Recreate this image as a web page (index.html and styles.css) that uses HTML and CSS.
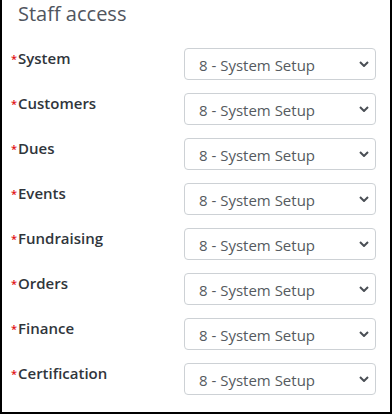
FILE: index.html
```html
<!DOCTYPE html>
<html lang="en">
<head>
    <meta charset="UTF-8" />
    <meta name="viewport" content="width=device-width, initial-scale=1.0" />
    <title>Staff access</title>
    <link rel="stylesheet" href="styles.css">
</head>
<body>

<section class="panel">
    <h2>Staff access</h2>
    <div class="access-list">
        <div class="access-row">
            <label><span class="req">*</span>System</label>
            <div class="select-wrap">
                <select><option>8 - System Setup</option></select>
                <svg class="chevron" viewBox="0 0 10 6"><path d="M1 1l4 4 4-4"/></svg>
            </div>
        </div>
        <div class="access-row">
            <label><span class="req">*</span>Customers</label>
            <div class="select-wrap">
                <select><option>8 - System Setup</option></select>
                <svg class="chevron" viewBox="0 0 10 6"><path d="M1 1l4 4 4-4"/></svg>
            </div>
        </div>
        <div class="access-row">
            <label><span class="req">*</span>Dues</label>
            <div class="select-wrap">
                <select><option>8 - System Setup</option></select>
                <svg class="chevron" viewBox="0 0 10 6"><path d="M1 1l4 4 4-4"/></svg>
            </div>
        </div>
        <div class="access-row">
            <label><span class="req">*</span>Events</label>
            <div class="select-wrap">
                <select><option>8 - System Setup</option></select>
                <svg class="chevron" viewBox="0 0 10 6"><path d="M1 1l4 4 4-4"/></svg>
            </div>
        </div>
        <div class="access-row">
            <label><span class="req">*</span>Fundraising</label>
            <div class="select-wrap">
                <select><option>8 - System Setup</option></select>
                <svg class="chevron" viewBox="0 0 10 6"><path d="M1 1l4 4 4-4"/></svg>
            </div>
        </div>
        <div class="access-row">
            <label><span class="req">*</span>Orders</label>
            <div class="select-wrap">
                <select><option>8 - System Setup</option></select>
                <svg class="chevron" viewBox="0 0 10 6"><path d="M1 1l4 4 4-4"/></svg>
            </div>
        </div>
        <div class="access-row">
            <label><span class="req">*</span>Finance</label>
            <div class="select-wrap">
                <select><option>8 - System Setup</option></select>
                <svg class="chevron" viewBox="0 0 10 6"><path d="M1 1l4 4 4-4"/></svg>
            </div>
        </div>
        <div class="access-row">
            <label><span class="req">*</span>Certification</label>
            <div class="select-wrap">
                <select><option>8 - System Setup</option></select>
                <svg class="chevron" viewBox="0 0 10 6"><path d="M1 1l4 4 4-4"/></svg>
            </div>
        </div>
    </div>
</section>

</body>
</html>
```

FILE: styles.css
```css
:root {
    --heading: #50555e;
    --label: #30353b;
    --field-text: #555a60;
    --field-border: #cdd1d5;
    --required: #e01010;
}

* {
    box-sizing: border-box;
    margin: 0;
    padding: 0;
}

body {
    font-family: 'Open Sans', sans-serif;
    background: #fff;
}

.panel {
    width: 392px;
    height: 414px;
    border: 2px solid #000;
    border-top: none;
    padding: 2px 14px 0 9px;
}

.panel h2 {
    font-size: 20px;
    font-weight: 400;
    line-height: 24px;
    color: var(--heading);
    padding-left: 7px;
    margin-bottom: 22px;
}

.access-list {
    display: flex;
    flex-direction: column;
    gap: 13px;
}

.access-row {
    display: flex;
    justify-content: space-between;
    align-items: flex-start;
}

.access-row label {
    font-size: 15px;
    font-weight: 600;
    line-height: 20px;
    color: var(--label);
}

.req {
    display: inline-block;
    width: 7px;
    color: var(--required);
    font-size: 11px;
    font-weight: 600;
    vertical-align: 1px;
}

.select-wrap {
    position: relative;
    width: 192px;
}

.select-wrap select {
    appearance: none;
    -webkit-appearance: none;
    width: 100%;
    height: 32px;
    border: 1px solid var(--field-border);
    border-radius: 4px;
    background: #fff;
    padding: 2px 30px 0 14px;
    font-family: 'Open Sans', sans-serif;
    font-size: 15px;
    color: var(--field-text);
}

/* flèche du select */
.chevron {
    position: absolute;
    right: 7px;
    top: 13px;
    width: 10px;
    height: 6px;
    fill: none;
    stroke: #4a4f55;
    stroke-width: 2;
    pointer-events: none;
}
```
